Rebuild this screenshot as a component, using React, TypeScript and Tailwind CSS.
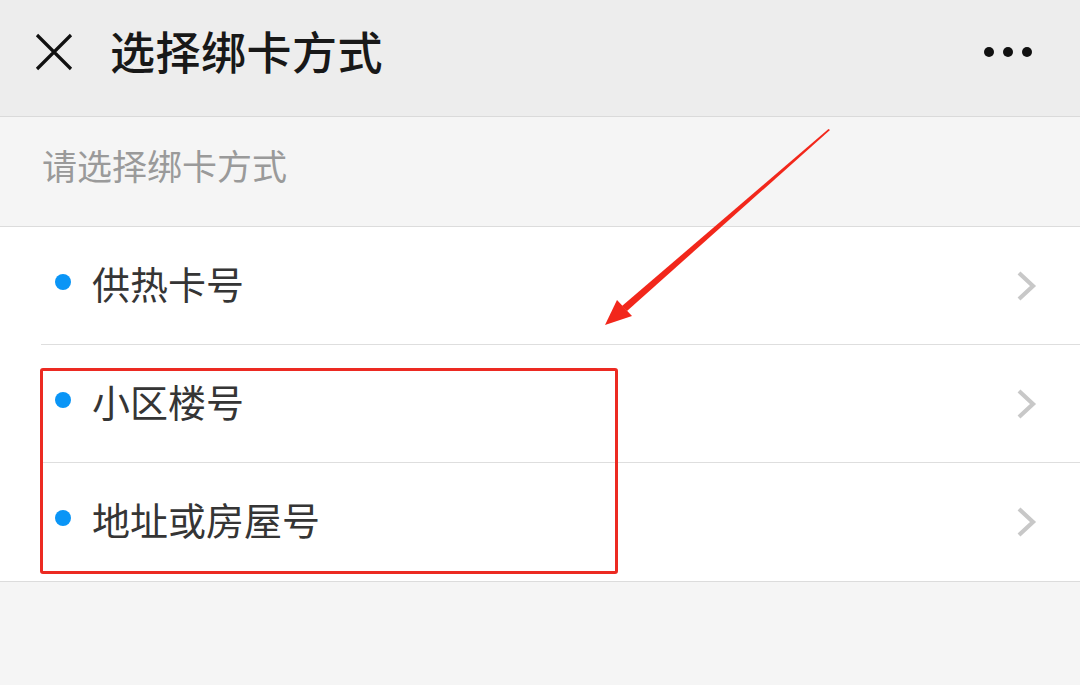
const options = ['供热卡号', '小区楼号', '地址或房屋号'];

export default function App() {
  return (
    <div
      className="relative w-[1080px] h-[685px] overflow-hidden bg-[#f5f5f5]"
      style={{ fontFamily: '"Noto Sans CJK SC", "Noto Sans", sans-serif' }}
    >
      {/* Top bar */}
      <div className="h-[117px] bg-[#ededed] border-b border-[#dadada] flex items-center pl-[34px] pr-[48px] pb-[12px]">
        <svg width="40" height="40" viewBox="0 0 40 40" className="shrink-0">
          <path d="M3 3 L37 37 M37 3 L3 37" stroke="#111" strokeWidth="3.2" fill="none" />
        </svg>
        <h1 className="ml-[36px] text-[45px] leading-none font-medium text-[#181818] tracking-[0.5px] -mt-[4px]">
          选择绑卡方式
        </h1>
        <div className="ml-auto flex items-center gap-[9px]">
          <span className="w-[10px] h-[10px] rounded-full bg-[#111]" />
          <span className="w-[10px] h-[10px] rounded-full bg-[#111]" />
          <span className="w-[10px] h-[10px] rounded-full bg-[#111]" />
        </div>
      </div>

      {/* Section hint */}
      <div className="h-[110px] flex items-center pl-[42px] border-b border-[#dcdcdc]">
        <p className="text-[35px] leading-none text-[#9a9a9a] -mt-[14px]">请选择绑卡方式</p>
      </div>

      {/* Options */}
      <ul className="bg-white border-b border-[#dcdcdc]">
        {options.map((label, i) => (
          <li key={label} className="pl-[41px]">
            <div
              className={
                'h-[118px] flex items-center pr-[42px] ' +
                (i < options.length - 1 ? 'border-b border-[#dedede]' : '')
              }
            >
              <span className="ml-[14px] w-[16px] h-[16px] rounded-full bg-[#0a95f6] -mt-[8px]" />
              <span className="ml-[21px] text-[38px] leading-none text-[#353535] -mt-[6px]">{label}</span>
              <svg width="22" height="32" viewBox="0 0 22 32" className="ml-auto">
                <path d="M3 3 L17 16 L3 29" stroke="#c8c8c8" strokeWidth="4.2" fill="none" strokeLinejoin="miter" />
              </svg>
            </div>
          </li>
        ))}
      </ul>

      {/* Annotation overlay */}
      <div className="absolute left-[40px] top-[368px] w-[578px] h-[206px] border-[3px] border-[#ec2a22] rounded-[3px]" />
      <svg className="absolute left-0 top-0" width="1080" height="685" viewBox="0 0 1080 685">
        <polygon points="830,130 828.5,129 622,306 627,311" fill="#f2271b" />
        <polygon points="605,325 617,300 632,316" fill="#f2271b" />
      </svg>
    </div>
  );
}
